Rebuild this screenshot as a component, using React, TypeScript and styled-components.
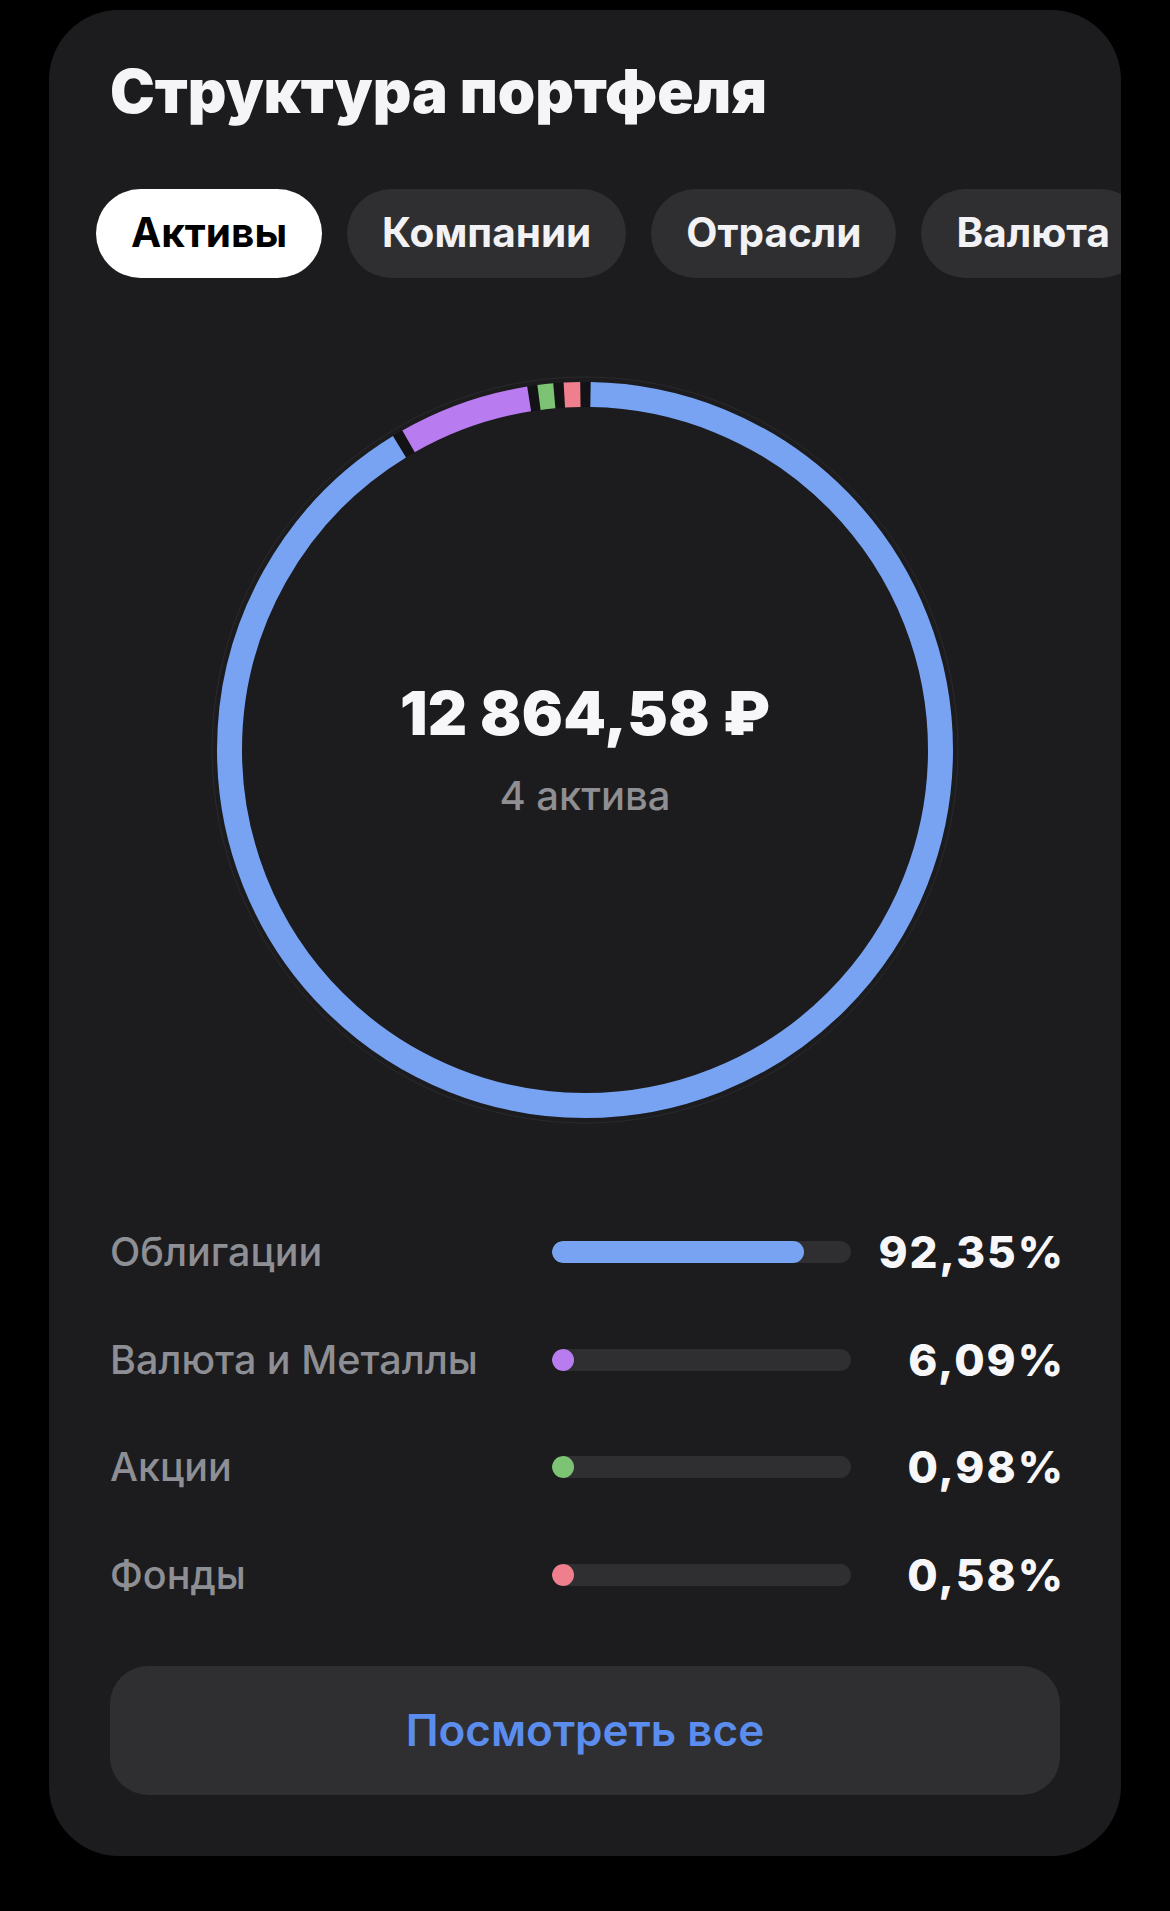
import React from "react";
import styled, { createGlobalStyle } from "styled-components";

const GlobalStyle = createGlobalStyle`
  html, body {
    margin: 0;
    padding: 0;
    background: #000000;
  }
  body {
    font-family: "Inter", "Noto Sans", "DejaVu Sans", sans-serif;
    -webkit-font-smoothing: antialiased;
  }
  * { box-sizing: border-box; }
`;

const Page = styled.div`
  width: 1170px;
  min-height: 1911px;
  padding: 10px 49px 0 49px;
  background: #000000;
`;

const Card = styled.section`
  width: 1072px;
  height: 1846px;
  background: #1c1c1e;
  border-radius: 70px;
  overflow: hidden;
  display: flex;
  flex-direction: column;
  padding: 0 0 61px 0;
`;

const Title = styled.h1`
  margin: 0;
  padding: 46px 61px 0 61px;
  font-size: 60px;
  line-height: 70px;
  font-weight: 900;
  color: #f5f5f7;
  letter-spacing: 0px;
  white-space: nowrap;
`;

const Tabs = styled.div`
  display: flex;
  gap: 25px;
  padding: 0 0 0 47px;
  margin-top: 63px;
  overflow: hidden;
`;

const Tab = styled.button<{ $active?: boolean }>`
  flex: 0 0 auto;
  height: 89px;
  padding: 0 35px;
  border: none;
  border-radius: 45px;
  background: ${(p) => (p.$active ? "#ffffff" : "#2f2f32")};
  color: ${(p) => (p.$active ? "#000000" : "#f2f2f4")};
  font-family: "Inter", "Noto Sans", sans-serif;
  font-size: 40.5px;
  font-weight: 700;
  line-height: 1;
  white-space: nowrap;
`;

const DonutWrap = styled.div`
  display: grid;
  justify-content: center;
  margin-top: 92px;
  & > * {
    grid-area: 1 / 1;
  }
`;

const DonutSvg = styled.svg`
  width: 760px;
  height: 760px;
  display: block;
`;

const Center = styled.div`
  display: flex;
  flex-direction: column;
  align-items: center;
  justify-content: center;
  padding-bottom: 2px;
`;

const Amount = styled.div`
  font-size: 61px;
  line-height: 72px;
  font-weight: 900;
  color: #f7f7f9;
  letter-spacing: 0.3px;
`;

const Sub = styled.div`
  margin-top: 22px;
  font-size: 40px;
  line-height: 50px;
  font-weight: 500;
  color: #8e8e93;
`;

const Legend = styled.div`
  display: flex;
  flex-direction: column;
  margin-top: 68px;
  padding: 0 61px;
`;

const Row = styled.div`
  display: grid;
  grid-template-columns: 442px 299px 1fr;
  align-items: center;
  height: 107.7px;
`;

const Label = styled.div`
  font-size: 39.5px;
  font-weight: 500;
  color: #8d8f95;
  letter-spacing: 0px;
  white-space: nowrap;
`;

const Track = styled.div`
  height: 22px;
  border-radius: 11px;
  background: #2f2f32;
  overflow: hidden;
`;

const Fill = styled.div<{ $color: string }>`
  height: 100%;
  min-width: 22px;
  border-radius: 11px;
  background: ${(p) => p.$color};
`;

const Percent = styled.div`
  text-align: right;
  margin-right: -5px;
  font-size: 44px;
  font-weight: 800;
  color: #f7f7f9;
  letter-spacing: 2px;
  white-space: nowrap;
`;

const ViewAll = styled.button`
  margin: 37px 61px 0 61px;
  height: 129px;
  border: none;
  border-radius: 38px;
  background: #2f2f32;
  color: #5b8def;
  font-family: "Inter", "Noto Sans", sans-serif;
  font-size: 44px;
  font-weight: 600;
`;

type Segment = { color: string; from: number; to: number };

const segments: Segment[] = [
  { color: "#78a3f3", from: 0.9, to: 328.4 },
  { color: "#b87cf0", from: 330.1, to: 350.8 },
  { color: "#7cc373", from: 352.4, to: 354.9 },
  { color: "#ef7f8d", from: 356.5, to: 359.1 },
];

const items = [
  { label: "Облигации", value: "92,35%", color: "#78a3f3", width: 84.3 },
  { label: "Валюта и Металлы", value: "6,09%", color: "#b87cf0", width: 0 },
  { label: "Акции", value: "0,98%", color: "#7cc373", width: 0 },
  { label: "Фонды", value: "0,58%", color: "#ef7f8d", width: 0 },
];

const R = 355.5;
const C = 2 * Math.PI * R;

function Donut() {
  return (
    <DonutSvg viewBox="0 0 760 760">
      <circle cx="380" cy="380" r={373} fill="none" stroke="#2a2a2d" strokeWidth="1" />
      <circle cx="380" cy="380" r={R} fill="none" stroke="#131315" strokeWidth="25" />
      <g transform="rotate(-90 380 380)">
        {segments.map((s, i) => {
          const len = ((s.to - s.from) / 360) * C;
          const off = (s.from / 360) * C;
          return (
            <circle
              key={i}
              cx="380"
              cy="380"
              r={R}
              fill="none"
              stroke={s.color}
              strokeWidth="25"
              strokeDasharray={`${len} ${C - len}`}
              strokeDashoffset={-off}
            />
          );
        })}
      </g>
    </DonutSvg>
  );
}

export default function App() {
  return (
    <>
      <GlobalStyle />
      <Page>
        <Card>
          <Title>Структура портфеля</Title>
          <Tabs>
            <Tab $active>Активы</Tab>
            <Tab>Компании</Tab>
            <Tab>Отрасли</Tab>
            <Tab>Валюта</Tab>
          </Tabs>
          <DonutWrap>
            <Donut />
            <Center>
              <Amount>12 864,58 ₽</Amount>
              <Sub>4 актива</Sub>
            </Center>
          </DonutWrap>
          <Legend>
            {items.map((it) => (
              <Row key={it.label}>
                <Label>{it.label}</Label>
                <Track>
                  <Fill $color={it.color} style={{ width: `${it.width}%` }} />
                </Track>
                <Percent>{it.value}</Percent>
              </Row>
            ))}
          </Legend>
          <ViewAll>Посмотреть все</ViewAll>
        </Card>
      </Page>
    </>
  );
}
